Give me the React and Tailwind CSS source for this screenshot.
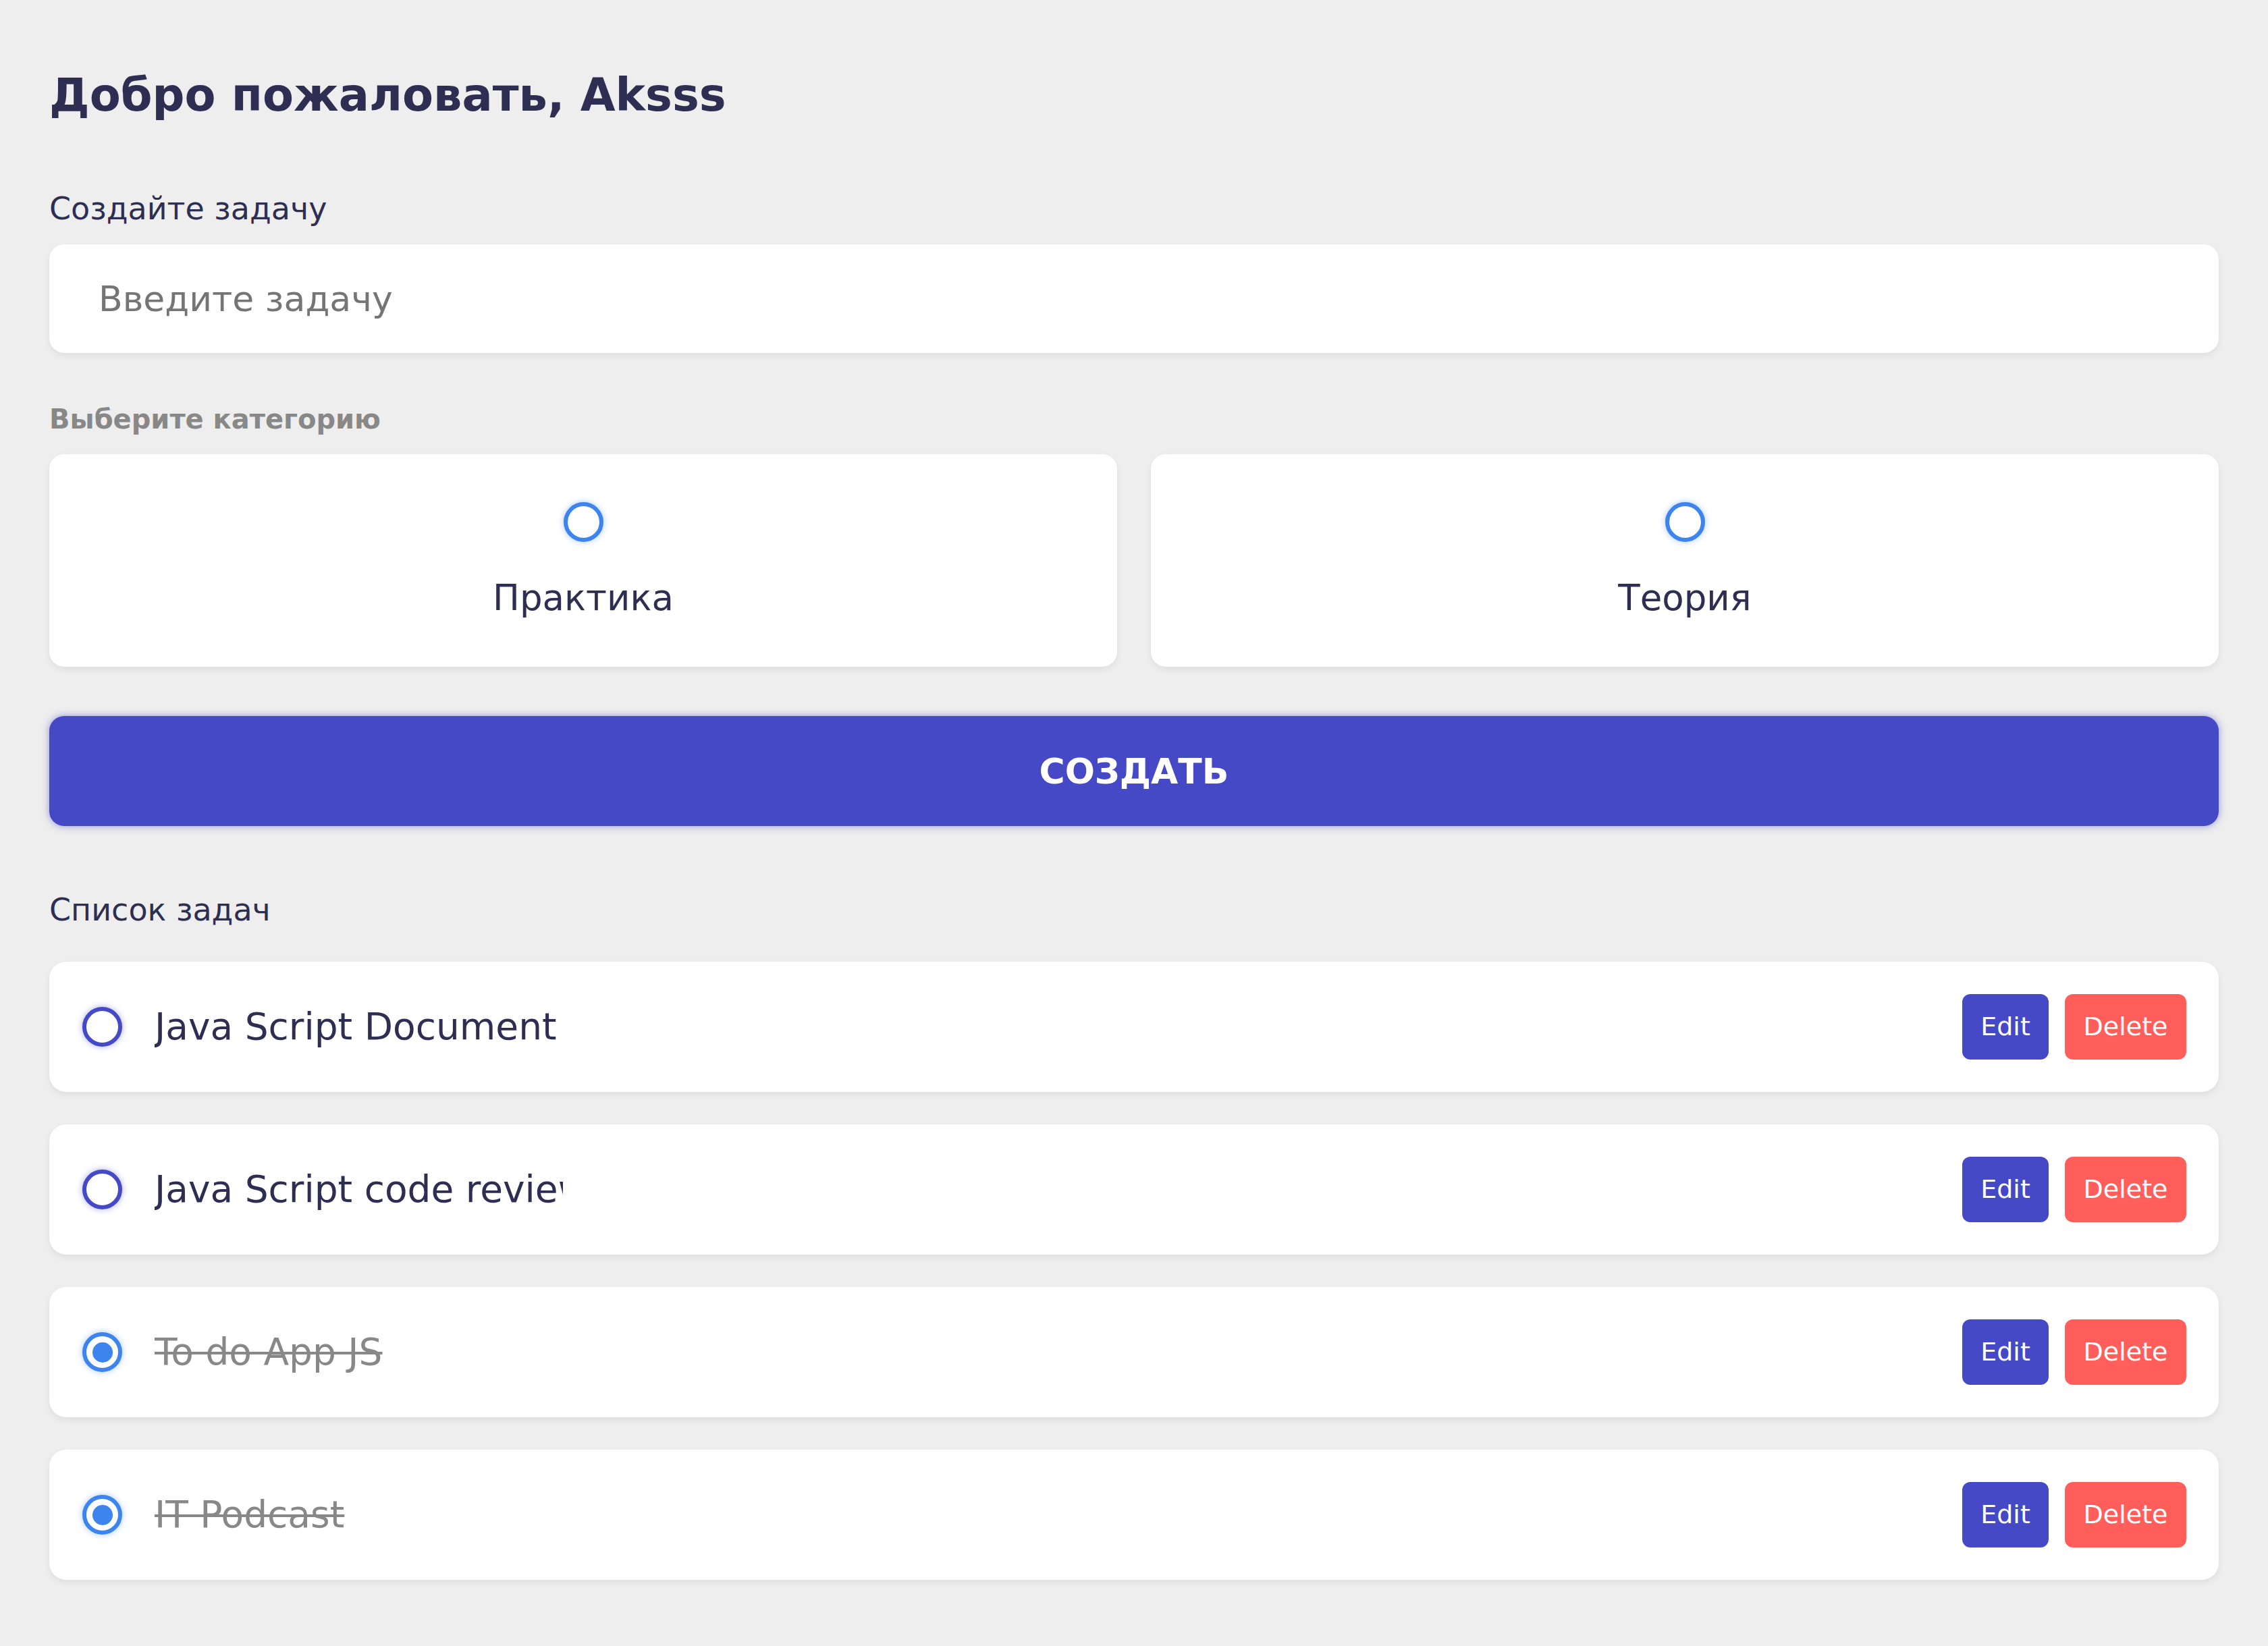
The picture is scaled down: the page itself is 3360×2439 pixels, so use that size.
import { useState } from 'react';

const TASKS = [
  { id: 1, text: 'Java Script Document', done: false },
  { id: 2, text: 'Java Script code review', done: false },
  { id: 3, text: 'To do App JS', done: true },
  { id: 4, text: 'IT Podcast', done: true },
];

const FONT = { fontFamily: "'DejaVu Sans', 'Noto Sans', sans-serif" };

function Radio({ checked, color }) {
  // ring + optional inner dot, with a soft glow like the original
  const ring =
    color === 'indigo'
      ? 'border-[#4549c5] shadow-[0_0_10px_rgba(69,73,197,0.45)]'
      : 'border-[#3d84ee] shadow-[0_0_10px_rgba(61,132,238,0.45)]';
  return (
    <span className={`flex h-[59px] w-[59px] shrink-0 items-center justify-center rounded-full border-[6px] bg-white ${ring}`}>
      {checked && <span className="h-[30px] w-[30px] rounded-full bg-[#3d84ee]" />}
    </span>
  );
}

export default function App() {
  const [category, setCategory] = useState(null);

  return (
    <div className="min-h-screen w-full bg-[#eeeeee] px-[73px] pt-[100px] pb-[100px] text-[#2e2e52]" style={FONT}>
      {/* ─── HEADER ─── */}
      <h1 className="text-[67px] font-bold leading-[82px]">Добро пожаловать, Aksss</h1>

      {/* ─── NEW TASK ─── */}
      <div className="mt-[99px] text-[46px] leading-[56px]">Создайте задачу</div>
      <div className="mt-[25px] flex h-[161px] items-center rounded-[22px] bg-white px-[73px] shadow-[0_4px_10px_rgba(0,0,0,0.07)]">
        <span className="text-[52px] text-[#757575]">Введите задачу</span>
      </div>

      <div className="mt-[73px] text-[40px] font-bold leading-[50px] text-[#888888]">Выберите категорию</div>
      <div className="mt-[27px] grid grid-cols-2 gap-[50px]">
        {['Практика', 'Теория'].map((c) => (
          <button
            key={c}
            onClick={() => setCategory(c)}
            className="flex h-[315px] flex-col items-center justify-center gap-[51px] rounded-[22px] bg-white shadow-[0_4px_10px_rgba(0,0,0,0.07)]"
          >
            <Radio checked={category === c} color="blue" />
            <span className="text-[53px] leading-[64px]">{c}</span>
          </button>
        ))}
      </div>

      <button className="mt-[73px] flex h-[163px] w-full items-center justify-center rounded-[22px] bg-[#4549c5] text-[52px] font-bold text-white shadow-[0_0_12px_rgba(69,73,197,0.55)]">
        СОЗДАТЬ
      </button>

      {/* ─── TODO LIST ─── */}
      <div className="mt-[96px] text-[46px] leading-[56px]">Список задач</div>
      <div className="mt-[49px] flex flex-col gap-[48px]">
        {TASKS.map((t) => (
          <div
            key={t.id}
            className="flex h-[193px] items-center rounded-[25px] bg-white pl-[49px] pr-[48px] shadow-[0_4px_10px_rgba(0,0,0,0.07)]"
          >
            <Radio checked={t.done} color={t.done ? 'blue' : 'indigo'} />
            <div
              className={`ml-[48px] w-[605px] overflow-hidden whitespace-nowrap text-[55px] ${
                t.done ? 'text-[#888888] line-through decoration-[4px]' : ''
              }`}
            >
              {t.text}
            </div>
            <div className="ml-auto flex gap-[24px]">
              <button className="h-[97px] w-[128px] rounded-[12px] bg-[#4549c5] text-[38px] text-white">Edit</button>
              <button className="h-[97px] w-[180px] rounded-[12px] bg-[#ff5e5b] text-[38px] text-white">Delete</button>
            </div>
          </div>
        ))}
      </div>
    </div>
  );
}
